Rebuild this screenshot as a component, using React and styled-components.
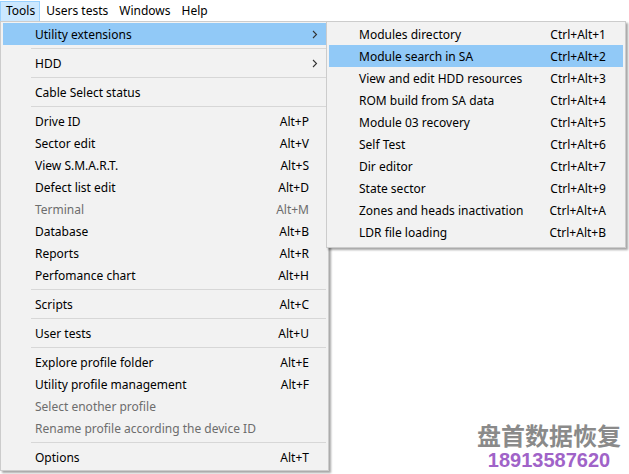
import styled, { createGlobalStyle } from "styled-components";

const GlobalStyle = createGlobalStyle`
  html, body {
    margin: 0;
    padding: 0;
    background: #ffffff;
  }
  body {
    font-family: "Noto Sans", "Open Sans", sans-serif;
    font-size: 12px;
    color: #000;
  }
`;

const mainItems = [
  { label: "Utility extensions", sub: true, active: true },
  "sep",
  { label: "HDD", sub: true },
  "sep",
  { label: "Cable Select status" },
  "sep",
  { label: "Drive ID", key: "Alt+P" },
  { label: "Sector edit", key: "Alt+V" },
  { label: "View S.M.A.R.T.", key: "Alt+S" },
  { label: "Defect list edit", key: "Alt+D" },
  { label: "Terminal", key: "Alt+M", disabled: true },
  { label: "Database", key: "Alt+B" },
  { label: "Reports", key: "Alt+R" },
  { label: "Perfomance chart", key: "Alt+H" },
  "sep",
  { label: "Scripts", key: "Alt+C" },
  "sep",
  { label: "User tests", key: "Alt+U" },
  "sep",
  { label: "Explore profile folder", key: "Alt+E" },
  { label: "Utility profile management", key: "Alt+F" },
  { label: "Select enother profile", disabled: true },
  { label: "Rename profile according the device ID", disabled: true },
  "sep",
  { label: "Options", key: "Alt+T" },
];

const subItems = [
  { label: "Modules directory", key: "Ctrl+Alt+1" },
  { label: "Module search in SA", key: "Ctrl+Alt+2", active: true },
  { label: "View and edit HDD resources", key: "Ctrl+Alt+3" },
  { label: "ROM build from SA data", key: "Ctrl+Alt+4" },
  { label: "Module 03 recovery", key: "Ctrl+Alt+5" },
  { label: "Self Test", key: "Ctrl+Alt+6" },
  { label: "Dir editor", key: "Ctrl+Alt+7" },
  { label: "State sector", key: "Ctrl+Alt+9" },
  { label: "Zones and heads inactivation", key: "Ctrl+Alt+A" },
  { label: "LDR file loading", key: "Ctrl+Alt+B" },
];

const Arrow = () => (
  <svg width="6" height="9" viewBox="0 0 6 9">
    <path d="M1 1 L4.5 4.5 L1 8" fill="none" stroke="#333" strokeWidth="1.1" />
  </svg>
);

const App = () => {
  return (
    <Page>
      <GlobalStyle />
      <MenuBar>
        <BarItem $open>Tools</BarItem>
        <BarItem>Users tests</BarItem>
        <BarItem>Windows</BarItem>
        <BarItem>Help</BarItem>
      </MenuBar>
      <Workspace>
        <Dropdown>
          {mainItems.map((item, i) =>
            item === "sep" ? (
              <Separator key={i} />
            ) : (
              <Item key={i} $active={item.active} $disabled={item.disabled}>
                <Label>{item.label}</Label>
                {item.key && <Shortcut>{item.key}</Shortcut>}
                {item.sub && (
                  <SubArrow>
                    <Arrow />
                  </SubArrow>
                )}
              </Item>
            )
          )}
        </Dropdown>
        <SubMenu>
          {subItems.map((item, i) => (
            <SubItem key={i} $active={item.active}>
              <Label>{item.label}</Label>
              <SubShortcut>{item.key}</SubShortcut>
            </SubItem>
          ))}
        </SubMenu>
        <Watermark>
          <MarkTitle>盘首数据恢复</MarkTitle>
          <MarkPhone>18913587620</MarkPhone>
        </Watermark>
      </Workspace>
    </Page>
  );
};

export default App;

const Page = styled.div`
  width: 629px;
  height: 474px;
  overflow: hidden;
  background: #fff;
`;

const MenuBar = styled.div`
  display: flex;
  height: 21px;
  align-items: stretch;
  padding-top: 1px;
  box-sizing: border-box;
`;

const BarItem = styled.div`
  display: flex;
  align-items: center;
  padding: 0 4px 1px 5px;
  box-sizing: border-box;
  background: ${(p) => (p.$open ? "#cce8ff" : "transparent")};
  border: 1px solid ${(p) => (p.$open ? "#99d1ff" : "transparent")};
  border-bottom: none;
  line-height: 1;
`;

const Workspace = styled.div`
  position: relative;
  height: 453px;
`;

const Dropdown = styled.div`
  position: absolute;
  top: 0;
  left: 0;
  width: 329px;
  box-sizing: border-box;
  padding: 1px 2px 2px;
  background: #f2f2f2;
  border: 1px solid #cccccc;
  box-shadow: 2px 2px 2px rgba(0, 0, 0, 0.35);
`;

const Item = styled.div`
  position: relative;
  display: flex;
  align-items: center;
  height: 22px;
  padding: 0 17px 0 32px;
  background: ${(p) => (p.$active ? "#91c9f7" : "transparent")};
  color: ${(p) => (p.$disabled ? "#6d6d6d" : "#000")};
`;

const Label = styled.span`
  flex: 1;
  white-space: nowrap;
`;

const Shortcut = styled.span`
  white-space: nowrap;
`;

const SubArrow = styled.span`
  position: absolute;
  right: 8px;
  top: 7px;
  display: flex;
`;

const Separator = styled.div`
  height: 1px;
  margin: 3px 0 3px 28px;
  background: #d7d7d7;
`;

const SubMenu = styled.div`
  position: absolute;
  top: 0;
  left: 326px;
  width: 300px;
  box-sizing: border-box;
  padding: 1px 2px 4px;
  background: #f2f2f2;
  border: 1px solid #cccccc;
  box-shadow: 2px 2px 2px rgba(0, 0, 0, 0.35);
`;

const SubItem = styled.div`
  display: flex;
  align-items: center;
  height: 22px;
  padding: 0 17px 0 30px;
  background: ${(p) => (p.$active ? "#91c9f7" : "transparent")};
`;

const SubShortcut = styled.span`
  white-space: nowrap;
  margin-left: 24px;
`;

const Watermark = styled.div`
  position: absolute;
  right: 8px;
  bottom: 4px;
  display: flex;
  flex-direction: column;
  align-items: center;
  gap: 2px;
`;

const MarkTitle = styled.div`
  font-family: "Noto Sans CJK SC", sans-serif;
  font-size: 24px;
  line-height: 26px;
  font-weight: 700;
  color: #8a8a8a;
`;

const MarkPhone = styled.div`
  font-family: "Liberation Sans", sans-serif;
  font-size: 20px;
  line-height: 20px;
  font-weight: 700;
  color: #a063c8;
`;
